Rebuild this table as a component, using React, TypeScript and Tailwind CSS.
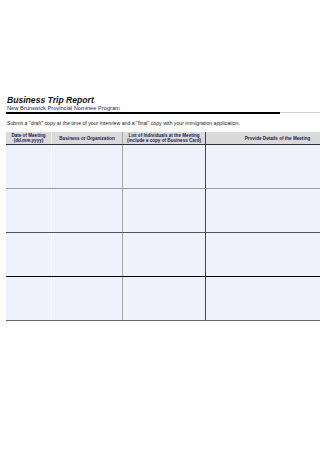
const headers = [
  ["Date of Meeting", "(dd.mm.yyyy)"],
  ["Business or Organization"],
  ["List of Individuals at the Meeting", "(include a copy of Business Card)"],
  ["Provide Details of the Meeting"],
]

const rowBorders = ["border-[#9a9a9a]", "border-[#555]", "border-black", "border-[#666]"]

export default function App() {
  return (
    <div
      className="w-[320px] h-[455px] overflow-hidden bg-white pt-[95px] pl-[6px]"
      style={{ fontFamily: '"Liberation Sans", Arial, sans-serif' }}
    >
      {/* Title block */}
      <h1 className="h-[10px] pl-px text-[8.6px] leading-[10px] font-bold italic text-[#111]">
        Business Trip Report
      </h1>
      <p className="h-[6px] pl-px text-[5.7px] leading-[6px] text-[#1c2560]">
        New Brunswick Provincial Nominee Program
      </p>
      <div className="mt-px flex h-[2px] items-start">
        <div className="h-[1.5px] w-[274px] bg-black" />
        <div className="h-px flex-1 bg-[#cfcfcf]" />
      </div>
      <p className="mt-[6px] h-[6px] pl-px text-[5.2px] leading-[6px] text-[#222]">
        Submit a "draft" copy at the time of your interview and a "final" copy with your immigration application.
      </p>

      {/* Table, runs past the right edge */}
      <div className="mt-[6px] w-[343px]">
        <div className="grid h-[13px] grid-cols-[45px_71px_83px_1fr] border-b border-[#333] bg-[#dadada]">
          {headers.map((lines, i) => (
            <div
              key={i}
              className={
                "flex flex-col items-center justify-center text-center text-[4.6px] leading-[5px] font-bold text-[#1a2250] " +
                (i === 1 ? "border-l border-[#ececec]" : i === 2 ? "border-l border-[#a8a8a8]" : i === 3 ? "border-l border-[#444]" : "")
              }
            >
              {lines.map((l) => (
                <span key={l} className="whitespace-nowrap">{l}</span>
              ))}
            </div>
          ))}
        </div>
        {rowBorders.map((b, r) => (
          <div key={r} className={"grid h-[44px] grid-cols-[45px_71px_83px_1fr] border-b bg-[#eff1fd] " + b}>
            <div />
            <div className="border-l border-white" />
            <div className="border-l border-[#a8a8a8]" />
            <div className="border-l border-[#444]" />
          </div>
        ))}
      </div>
    </div>
  )
}
